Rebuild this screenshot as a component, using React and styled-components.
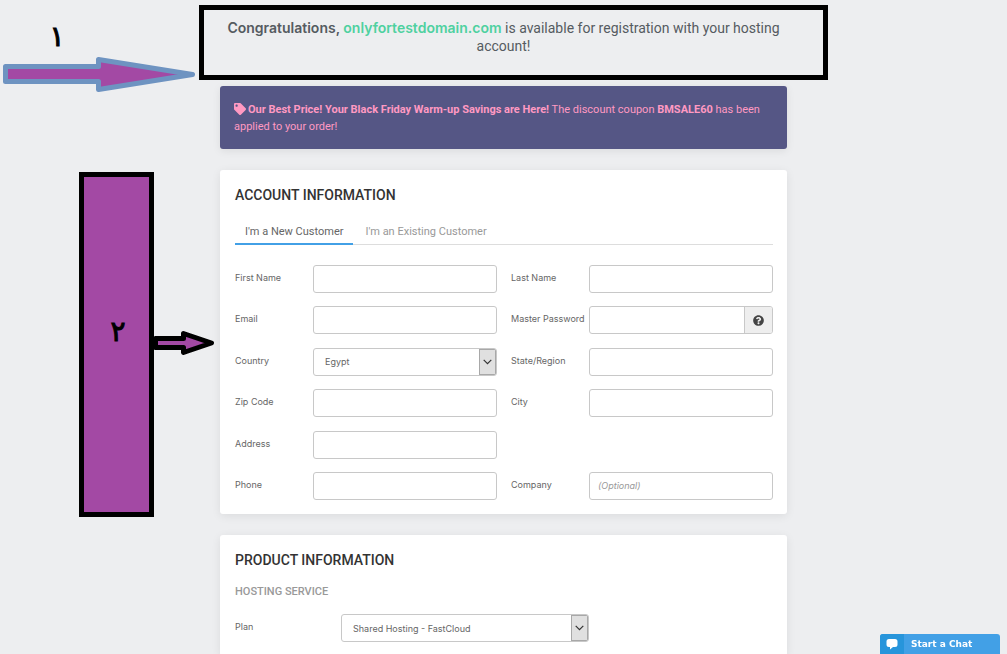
import React, { useId } from "react";
import styled, { createGlobalStyle } from "styled-components";
import { FaTag, FaQuestionCircle } from "react-icons/fa";

const GlobalStyle = createGlobalStyle`
  *, *::before, *::after { box-sizing: border-box; }
  html { scrollbar-width: none; }
  body {
    margin: 0;
    background: #edeef0;
    color: #666;
    font-family: Roboto, "Liberation Sans", sans-serif;
    font-size: 10px;
    overflow-x: hidden;
  }
`;

const Column = styled.main`
  position: relative;
  width: 100%;
  max-width: 567px;
  margin: 0 auto;
  padding-bottom: 20px;
`;

const Notice = styled.p`
  margin: 0;
  padding: 19px 0 31px;
  font-size: 14px;
  line-height: 18px;
  text-align: center;
  color: #555b61;

  strong {
    font-family: Inter, sans-serif;
    font-weight: 600;
  }
`;

const Domain = styled.strong`
  color: #4fd1a0;
`;

const Promo = styled.p`
  margin: 0 0 21px;
  padding: 15px 14px 14px;
  border-radius: 3px;
  background: #555685;
  color: #ff99c2;
  font-size: 11px;
  line-height: 17px;
  box-shadow: 0 2px 8px rgba(0, 0, 0, 0.08);

  svg {
    vertical-align: -2px;
    margin-right: 2px;
  }
`;

const Card = styled.section`
  margin-bottom: 21px;
  padding: 15px 14px 14px 15px;
  border-radius: 3px;
  background: #fff;
  box-shadow: 0 2px 10px rgba(0, 0, 0, 0.08);
`;

const Title = styled.h2`
  margin: 0 0 13px;
  font-size: 14px;
  line-height: 20px;
  font-weight: 500;
  text-transform: uppercase;
  color: #333;
`;

const Subtitle = styled.h3`
  margin: 0 0 14px;
  font-size: 11px;
  line-height: 17px;
  font-weight: 500;
  text-transform: uppercase;
  color: #999;
`;

const Tabs = styled.div`
  display: flex;
  gap: 2px;
  margin-bottom: 20px;
  box-shadow: inset 0 -1px #ddd;
`;

const Tab = styled.button`
  padding: 5px 10px 3px;
  border: 0;
  border-bottom: 2px solid ${(p) => (p.$active ? "#42a0e6" : "transparent")};
  background: none;
  font: inherit;
  font-size: 11px;
  line-height: 17px;
  color: ${(p) => (p.$active ? "#666" : "#999")};
  cursor: pointer;
`;

const FieldGrid = styled.form`
  display: grid;
  grid-template-columns: 1fr 1fr;
  column-gap: 14px;
  align-content: space-between;
  min-height: 235px;
`;

const Field = styled.div`
  display: grid;
  grid-template-columns: ${(p) => p.$labelWidth || 78}px minmax(0, ${(p) => (p.$wide ? "248px" : "1fr")});
  grid-column: ${(p) => (p.$startRow ? "1" : "auto")};
  height: 28px;
  font-family: Inter, sans-serif;
  font-size: 9px;
`;

const Label = styled.label`
  line-height: 26px;
  white-space: nowrap;
  color: #666;
`;

const InputGroup = styled.div`
  display: flex;
  height: 28px;
  border: 1px solid #c8c8c8;
  border-radius: 3px;
  background: #fff;
  overflow: hidden;
`;

const Input = styled.input`
  flex: 1;
  min-width: 0;
  padding: 0 8px;
  border: 0;
  background: none;
  font: inherit;
  color: #666;

  &::placeholder {
    font-style: italic;
    color: #999;
  }
`;

const HelpButton = styled.button`
  display: flex;
  align-items: center;
  justify-content: center;
  width: 28px;
  padding: 0;
  border: 0;
  border-left: 1px solid #c8c8c8;
  background: #eee;
  color: #444;
`;

const Select = styled.select`
  flex: 1;
  min-width: 0;
  padding: 0 11px;
  border: 0;
  appearance: none;
  background: none;
  font: inherit;
  color: #666;
`;

const SelectArrow = styled.span`
  display: flex;
  align-items: center;
  justify-content: center;
  width: 17px;
  border: 1px solid #a8a8a8;
  background: #e0e0e0;
  pointer-events: none;
`;

const ChatButton = styled.button`
  position: fixed;
  right: 7px;
  bottom: 0;
  display: flex;
  width: 120px;
  height: 20px;
  padding: 0;
  border: 0;
  border-radius: 3px 3px 0 0;
  overflow: hidden;
  background: #42a0e6;
  color: #fff;
  font: bold 9px/20px "DejaVu Sans", sans-serif;
`;

const ChatIcon = styled.span`
  display: flex;
  align-items: center;
  justify-content: center;
  width: 24px;
  height: 20px;
  margin-right: 7px;
  background: #2795db;
`;

/* Hand-drawn step markers that lie over the page */
const Frame = styled.div`
  position: absolute;
  top: 5px;
  left: -21px;
  right: -41px;
  height: 75px;
  border: 5px solid #000;
  pointer-events: none;
`;

const StepBar = styled.div`
  position: absolute;
  top: 172px;
  left: -141px;
  width: 75px;
  height: 345px;
  border: 5px solid #000;
  background: #a349a4;
`;

const StepNumber = styled.span`
  position: absolute;
  top: ${(p) => p.$top}px;
  left: ${(p) => p.$left}px;
  width: 20px;
  text-align: center;
  font: 28px/40px "DejaVu Sans", sans-serif;
  -webkit-text-stroke: 1px #000;
  color: #000;
`;

const Arrow = styled.svg`
  position: absolute;
  top: ${(p) => p.$top}px;
  left: ${(p) => p.$left}px;
  fill: #a349a4;
  stroke-width: 5;
  stroke-linejoin: round;
`;

function TextField({ label, type = "text", placeholder, startRow, help }) {
  const id = useId();
  return (
    <Field $startRow={startRow}>
      <Label htmlFor={id}>{label}</Label>
      <InputGroup>
        <Input id={id} type={type} placeholder={placeholder} />
        {help && (
          <HelpButton type="button" aria-label="Password help">
            <FaQuestionCircle size={11} />
          </HelpButton>
        )}
      </InputGroup>
    </Field>
  );
}

function SelectField({ label, value, labelWidth, wide }) {
  const id = useId();
  return (
    <Field $labelWidth={labelWidth} $wide={wide}>
      <Label htmlFor={id}>{label}</Label>
      <InputGroup>
        <Select id={id} defaultValue={value}>
          <option>{value}</option>
        </Select>
        <SelectArrow>
          <svg width="9" height="6" viewBox="0 0 9 6" fill="none" stroke="#333" strokeWidth="1.2">
            <path d="M.7.8 4.5 4.6 8.3.8" />
          </svg>
        </SelectArrow>
      </InputGroup>
    </Field>
  );
}

export default function App() {
  return (
    <>
      <GlobalStyle />
      <Column>
        <Notice>
          <strong>Congratulations, </strong>
          <Domain>onlyfortestdomain.com</Domain> is available for registration with your hosting
          account!
        </Notice>
        <Promo>
          <FaTag size={12} />
          <strong>Our Best Price! Your Black Friday Warm-up Savings are Here!</strong> The discount
          coupon <strong>BMSALE60</strong> has been applied to your order!
        </Promo>
        <Card>
          <Title>Account Information</Title>
          <Tabs role="tablist">
            <Tab role="tab" aria-selected="true" $active>I'm a New Customer</Tab>
            <Tab role="tab" aria-selected="false">I'm an Existing Customer</Tab>
          </Tabs>
          <FieldGrid>
            <TextField label="First Name" />
            <TextField label="Last Name" />
            <TextField label="Email" type="email" />
            <TextField label="Master Password" type="password" help />
            <SelectField label="Country" value="Egypt" />
            <TextField label="State/Region" />
            <TextField label="Zip Code" />
            <TextField label="City" />
            <TextField label="Address" startRow />
            <TextField label="Phone" type="tel" startRow />
            <TextField label="Company" placeholder="(Optional)" />
          </FieldGrid>
        </Card>
        <Card>
          <Title>Product Information</Title>
          <Subtitle>Hosting Service</Subtitle>
          <SelectField label="Plan" value="Shared Hosting - FastCloud" labelWidth={106} wide />
        </Card>

        <Frame />
        <StepNumber $top={17} $left={-173}>١</StepNumber>
        <Arrow $top={55} $left={-220} width="200" height="40" stroke="#6e93c1">
          <path d="M5.5 11.5H98.5V4.5L192.5 19.5 98.5 34.5V26.5H5.5Z" />
        </Arrow>
        <StepBar />
        <StepNumber $top={312} $left={-112}>٢</StepNumber>
        <Arrow $top={328} $left={-70} width="70" height="30" stroke="#000">
          <path d="M5.5 10.5H33.5V5.5L61.5 15 33.5 24.5V19.5H5.5Z" />
        </Arrow>
      </Column>
      <ChatButton type="button">
        <ChatIcon>
          <svg width="12" height="12" viewBox="0 0 12 12" fill="#fff">
            <path d="M3 1h6Q11.500 1 11.500 3.500v3Q11.500 9 9 9H7L4 11.500V9H3Q.5 9 .5 6.500v-3Q.5 1 3 1Z" />
          </svg>
        </ChatIcon>
        Start a Chat
      </ChatButton>
    </>
  );
}
